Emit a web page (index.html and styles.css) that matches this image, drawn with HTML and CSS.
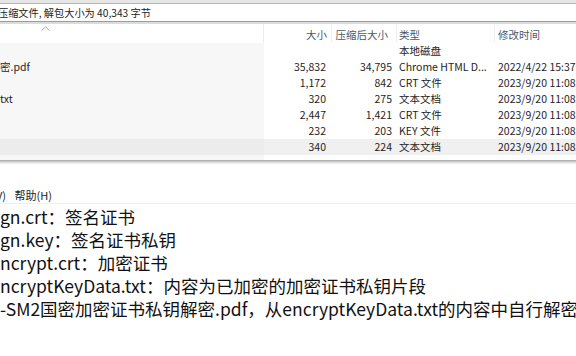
FILE: index.html
```html
<!DOCTYPE html>
<html lang="zh-CN">
<head>
    <meta charset="UTF-8">
    <title>压缩文件</title>
    <link rel="stylesheet" href="styles.css">
</head>
<body>
<div class="archive">
    <div class="topline"></div>
    <div class="infobar">压缩文件, 解包大小为 40,343 字节</div>
    <div class="sep"></div>

    <div class="list">
        <div class="row head">
            <div class="cell name">
                <svg class="caret" width="9" height="5" viewBox="0 0 9 5"><path d="M0.5 4.5 L4.5 0.8 L8.5 4.5" fill="none" stroke="#a0a0a0" stroke-width="1"/></svg>
            </div>
            <div class="cell size">大小</div>
            <div class="cell packed">压缩后大小</div>
            <div class="cell type">类型</div>
            <div class="cell time">修改时间</div>
        </div>

        <div class="row">
            <div class="cell name"></div>
            <div class="cell size"></div>
            <div class="cell packed"></div>
            <div class="cell type">本地磁盘</div>
            <div class="cell time"></div>
        </div>
        <div class="row">
            <div class="cell name">密.pdf</div>
            <div class="cell size">35,832</div>
            <div class="cell packed">34,795</div>
            <div class="cell type">Chrome HTML D...</div>
            <div class="cell time">2022/4/22 15:37</div>
        </div>
        <div class="row">
            <div class="cell name"></div>
            <div class="cell size">1,172</div>
            <div class="cell packed">842</div>
            <div class="cell type">CRT 文件</div>
            <div class="cell time">2023/9/20 11:08</div>
        </div>
        <div class="row">
            <div class="cell name">txt</div>
            <div class="cell size">320</div>
            <div class="cell packed">275</div>
            <div class="cell type">文本文档</div>
            <div class="cell time">2023/9/20 11:08</div>
        </div>
        <div class="row">
            <div class="cell name"></div>
            <div class="cell size">2,447</div>
            <div class="cell packed">1,421</div>
            <div class="cell type">CRT 文件</div>
            <div class="cell time">2023/9/20 11:08</div>
        </div>
        <div class="row">
            <div class="cell name"></div>
            <div class="cell size">232</div>
            <div class="cell packed">203</div>
            <div class="cell type">KEY 文件</div>
            <div class="cell time">2023/9/20 11:08</div>
        </div>
        <div class="row selected">
            <div class="cell name"></div>
            <div class="cell size">340</div>
            <div class="cell packed">224</div>
            <div class="cell type">文本文档</div>
            <div class="cell time">2023/9/20 11:08</div>
        </div>
        <div class="row tail">
            <div class="cell name"></div>
        </div>
    </div>
    <div class="shadow"></div>
</div>

<div class="notepad">
    <div class="menubar">
        <span class="menu cut">V)</span>
        <span class="menu">帮助(H)</span>
    </div>
    <div class="text">
        <div class="line">gn.crt：签名证书</div>
        <div class="line">gn.key：签名证书私钥</div>
        <div class="line">ncrypt.crt：加密证书</div>
        <div class="line">ncryptKeyData.txt：内容为已加密的加密证书私钥片段</div>
        <div class="line">-SM2国密加密证书私钥解密.pdf，从encryptKeyData.txt的内容中自行解密</div>
    </div>
</div>
</body>
</html>
```

FILE: styles.css
```css
* {
    box-sizing: border-box;
}

body {
    margin: 0;
    width: 576px;
    height: 356px;
    overflow: hidden;
    background: #fff;
    font-family: "Noto Sans CJK SC", "Noto Sans", sans-serif;
    color: #1e1e1e;
}

.topline {
    height: 4px;
    background: #e6e6e6;
    border-bottom: 1px solid #b4b4b4;
}

.infobar {
    height: 17px;
    line-height: 18px;
    font-size: 10.2px;
    white-space: nowrap;
    text-indent: -2px;
    color: #222;
}

.sep {
    height: 3px;
    border-top: 1px solid #9c9c9c;
    background: #dcdcdc;
}

.list {
    font-size: 10.5px;
}

.row {
    display: grid;
    grid-template-columns: 264px 68px 65px 98px 1fr;
    height: 16px;
    line-height: 16px;
    white-space: nowrap;
}

.row.head {
    height: 19px;
    line-height: 22px;
    color: #4a586a;
}

.row.head .name {
    background: #fff;
    border-right: 1px solid #ececec;
    position: relative;
}

.caret {
    position: absolute;
    left: 41px;
    top: 2px;
}

.row.tail {
    height: 5px;
}

.cell {
    overflow: hidden;
}

.name {
    background: #f7f7f7;
}

.size {
    text-align: right;
    padding-right: 6px;
}

.packed {
    text-align: right;
    padding-right: 5px;
}

.row.head .size {
    padding-right: 4px;
    border-right: 1px solid #f0f0f0;
}

.row.head .packed {
    padding-right: 8px;
    border-right: 1px solid #f0f0f0;
}

.row.head .type {
    border-right: 1px solid #f0f0f0;
}

.type {
    padding-left: 2px;
}

.time {
    padding-left: 3px;
}

.row.selected {
    background: #f0f0f0;
}

.row.selected .name {
    background: #ececec;
}

.shadow {
    height: 4px;
    background: linear-gradient(#a4a4a4, #dedede 60%, #f4f4f4);
}

.notepad {
    padding-top: 23px;
}

.menubar {
    height: 17px;
    line-height: 16px;
    font-size: 11px;
    border-bottom: 1px solid #f0f0f0;
    white-space: nowrap;
    color: #222;
}

.menu {
    margin-right: 6px;
}

.menu.cut {
    display: inline-block;
    margin-left: -4px;
}

.text {
    padding-top: 1px;
    font-size: 17.5px;
    line-height: 23px;
    white-space: nowrap;
    color: #111;
}
```
